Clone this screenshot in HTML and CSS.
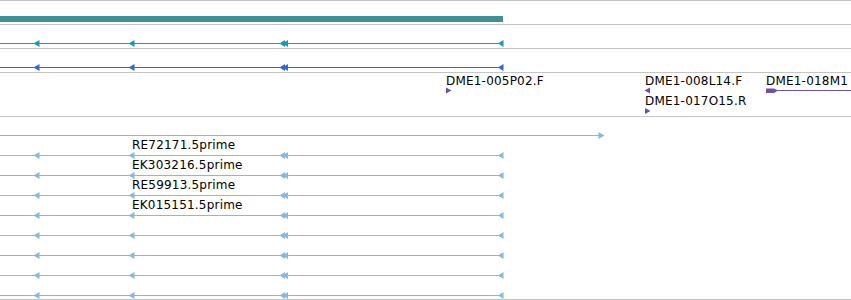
FILE: index.html
```html
<!DOCTYPE html>
<html lang="en">
<head>
    <meta charset="UTF-8">
    <title>Track view</title>
    <link rel="stylesheet" href="styles.css">
</head>
<body>
    <div class="tracks">
        <!-- Gene span -->
        <div class="track track-thin">
            <svg class="canvas" width="851" height="23">
                <rect x="0" y="15" width="503" height="6" fill="#418f92"/>
            </svg>
        </div>

        <!-- Transcript (teal) -->
        <div class="track track-thin">
            <svg class="canvas" width="851" height="23">
                <g fill="#1a98b8">
                    <rect x="0" y="18" width="503" height="1"/>
                    <path d="M33.5 18.5 L39.5 15 L39.5 22 Z"/>
                    <path d="M128.5 18.5 L134.5 15 L134.5 22 Z"/>
                    <path d="M279.5 18.5 L285 15 L285 22 Z"/>
                    <path d="M282.5 18.5 L288 15 L288 22 Z"/>
                    <path d="M498 18.5 L503.5 15 L503.5 22 Z"/>
                </g>
            </svg>
        </div>

        <!-- Transcript (blue) -->
        <div class="track track-thin">
            <svg class="canvas" width="851" height="23">
                <g fill="#3468c8">
                    <rect x="0" y="18" width="503" height="1"/>
                    <path d="M33.5 18.5 L39.5 15 L39.5 22 Z"/>
                    <path d="M128.5 18.5 L134.5 15 L134.5 22 Z"/>
                    <path d="M279.5 18.5 L285 15 L285 22 Z"/>
                    <path d="M282.5 18.5 L288 15 L288 22 Z"/>
                    <path d="M498 18.5 L503.5 15 L503.5 22 Z"/>
                </g>
            </svg>
        </div>

        <!-- BAC ends -->
        <div class="track track-ends">
            <svg class="canvas" width="851" height="43">
                <g fill="#6b52a8">
                    <path d="M446 14.5 L451.5 17.5 L446 20.5 Z"/>
                    <path d="M644.5 17.5 L650 14.5 L650 20.5 Z"/>
                    <path d="M645 35 L650.5 38 L645 41 Z"/>
                    <path d="M766 15.5 L774 15.5 L778 17.5 L774 20 L766 20 Z"/>
                    <rect x="766" y="17" width="85" height="1"/>
                </g>
            </svg>
            <span class="label" style="left: 446px; top: 1px;">DME1-005P02.F</span>
            <span class="label" style="left: 645px; top: 1px;">DME1-008L14.F</span>
            <span class="label" style="left: 645px; top: 21px;">DME1-017O15.R</span>
            <span class="label" style="left: 766px; top: 1px;">DME1-018M1</span>
        </div>

        <!-- ESTs -->
        <div class="track track-ests">
            <svg class="canvas" width="851" height="182">
                <defs>
                    <g id="est-row">
                        <rect x="0" y="18" width="503" height="1"/>
                        <path d="M33.5 18.5 L39.5 15 L39.5 22 Z"/>
                        <path d="M128.5 18.5 L134.5 15 L134.5 22 Z"/>
                        <path d="M279.5 18.5 L285 15 L285 22 Z"/>
                        <path d="M282.5 18.5 L288 15 L288 22 Z"/>
                        <path d="M498 18.5 L503.5 15 L503.5 22 Z"/>
                    </g>
                </defs>
                <g fill="#8ab8dc">
                    <rect x="0" y="18" width="600" height="1"/>
                    <path d="M598.5 15 L604.5 18.5 L598.5 22 Z"/>
                    <use href="#est-row" y="20"/>
                    <use href="#est-row" y="40"/>
                    <use href="#est-row" y="60"/>
                    <use href="#est-row" y="80"/>
                    <use href="#est-row" y="100"/>
                    <use href="#est-row" y="120"/>
                    <use href="#est-row" y="140"/>
                    <use href="#est-row" y="160"/>
                </g>
            </svg>
            <span class="label" style="left: 132px; top: 21px;">RE72171.5prime</span>
            <span class="label" style="left: 132px; top: 41px;">EK303216.5prime</span>
            <span class="label" style="left: 132px; top: 61px;">RE59913.5prime</span>
            <span class="label" style="left: 132px; top: 81px;">EK015151.5prime</span>
        </div>
    </div>
</body>
</html>
```

FILE: styles.css
```css
body {
    margin: 0;
    background: #fff;
    font-family: 'DejaVu Sans', sans-serif;
    width: 851px;
    height: 300px;
    overflow: hidden;
}

.tracks {
    border-top: 1px solid #c4c4c4;
}

.track {
    position: relative;
    border-bottom: 1px solid #c4c4c4;
}

.track-thin {
    height: 23px;
}

.track-ends {
    height: 43px;
}

.track-ests {
    height: 182px;
}

.canvas {
    display: block;
}

.label {
    position: absolute;
    font-size: 12px;
    line-height: 14px;
    letter-spacing: 0.2px;
    color: #000;
    white-space: nowrap;
}
```
